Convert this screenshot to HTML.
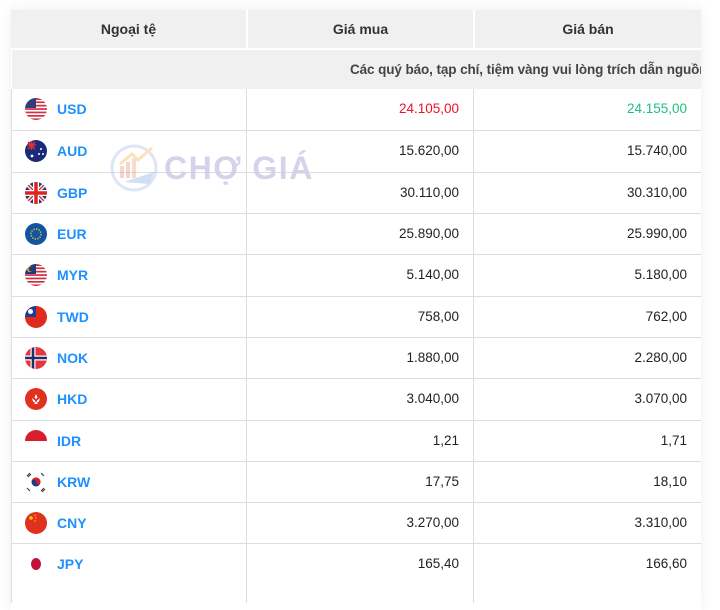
<!DOCTYPE html>
<html><head><meta charset="utf-8"><style>
*{margin:0;padding:0;box-sizing:border-box}
body{width:720px;height:580px;overflow:hidden;background:#fff;font-family:"Liberation Sans",Arial,sans-serif;position:relative}
.shadow{position:absolute;left:11px;top:10px;width:690px;height:600px;box-shadow:0 0 14px rgba(0,0,0,0.07)}
.hdr{position:absolute;top:10px;height:38px;background:#f0f0f0;font-size:14px;font-weight:bold;color:#333;text-align:center;line-height:38px}
.note{position:absolute;left:12px;top:50px;width:689px;height:39px;background:#f0f0f0;font-size:13.5px;font-weight:bold;color:#444;line-height:39px;white-space:nowrap;overflow:hidden}
.note span{position:absolute;left:338px;letter-spacing:-0.1px}
.row{position:absolute;left:11px;width:690px;height:42px;border-top:1px solid #ddd;border-left:1px solid #ddd;background:#fff}
.c1{position:absolute;left:0;width:235px;height:100%;border-right:1px solid #ddd}
.c2{position:absolute;left:235px;width:227px;height:100%;border-right:1px solid #ddd;text-align:right;padding-right:14px;font-size:13.5px;color:#222;line-height:40px}
.c3{position:absolute;left:462px;width:227px;height:100%;text-align:right;padding-right:14px;font-size:13.5px;color:#222;line-height:40px}
.code{position:absolute;left:45px;top:0;line-height:40px;font-size:14px;font-weight:bold;color:#1e90ff}
.flag{position:absolute;left:13px;top:9px;width:22px;height:22px}
.wm{position:absolute;left:110px;top:142px;width:210px;height:52px;pointer-events:none}
.wm span{position:absolute;left:54px;top:8px;font-size:32px;font-weight:bold;color:#cfcbe6;letter-spacing:1.5px;opacity:.85}
</style></head><body>
<div class="shadow"></div>
<div class="hdr" style="left:11px;width:235px">Ngoại tệ</div>
<div class="hdr" style="left:248px;width:225px">Giá mua</div>
<div class="hdr" style="left:475px;width:226px">Giá bán</div>
<div class="note"><span>Các quý báo, tạp chí, tiệm vàng vui lòng trích dẫn nguồn</span></div>

<div class="row" style="top:89px;border-top:none"><div class="c1"><svg class="flag" viewBox="0 0 22 22"><defs><clipPath id="a"><circle cx="11" cy="11" r="11"/></clipPath></defs><g clip-path="url(#a)"><rect width="22" height="22" fill="#fff"/><rect y="0" width="22" height="2" fill="#d22f45"/><rect y="3.4" width="22" height="1.7" fill="#d22f45"/><rect y="6.8" width="22" height="1.7" fill="#d22f45"/><rect y="10.2" width="22" height="1.7" fill="#d22f45"/><rect y="13.6" width="22" height="1.7" fill="#d22f45"/><rect y="17" width="22" height="1.7" fill="#d22f45"/><rect y="20.4" width="22" height="2" fill="#d22f45"/><rect width="11" height="10" fill="#2e3f7a"/></g></svg><span class="code">USD</span></div><div class="c2" style="color:#f0102a">24.105,00</div><div class="c3" style="color:#20c080">24.155,00</div></div>

<div class="row" style="top:130px"><div class="c1"><svg class="flag" viewBox="0 0 22 22"><circle cx="11" cy="11" r="11" fill="#1a2a78"/><path d="M2 5h9M6.5 1v9M3 2l7 7M10 2l-7 7" stroke="#d33" stroke-width="1.5"/><circle cx="16" cy="9" r="1" fill="#fff"/><circle cx="14" cy="14" r="1" fill="#fff"/><circle cx="18" cy="14" r="1" fill="#fff"/><circle cx="7" cy="16" r="1.4" fill="#fff"/></svg><span class="code">AUD</span></div><div class="c2">15.620,00</div><div class="c3">15.740,00</div></div>

<div class="row" style="top:172px"><div class="c1"><svg class="flag" viewBox="0 0 22 22"><defs><clipPath id="b"><circle cx="11" cy="11" r="11"/></clipPath></defs><g clip-path="url(#b)"><rect width="22" height="22" fill="#253a7a"/><path d="M0 0L22 22M22 0L0 22" stroke="#fff" stroke-width="4"/><path d="M0 0L22 22M22 0L0 22" stroke="#d22" stroke-width="1.4"/><path d="M11 0v22M0 11h22" stroke="#fff" stroke-width="6"/><path d="M11 0v22M0 11h22" stroke="#d22" stroke-width="3.5"/></g></svg><span class="code">GBP</span></div><div class="c2">30.110,00</div><div class="c3">30.310,00</div></div>

<div class="row" style="top:213px"><div class="c1"><svg class="flag" viewBox="0 0 22 22"><circle cx="11" cy="11" r="11" fill="#1453a0"/><circle cx="11" cy="11" r="5" fill="none" stroke="#e8c830" stroke-width="1.4" stroke-dasharray="1.3 1.3"/></svg><span class="code">EUR</span></div><div class="c2">25.890,00</div><div class="c3">25.990,00</div></div>

<div class="row" style="top:254px"><div class="c1"><svg class="flag" viewBox="0 0 22 22"><defs><clipPath id="c"><circle cx="11" cy="11" r="11"/></clipPath></defs><g clip-path="url(#c)"><rect width="22" height="22" fill="#fff"/><rect y="0" width="22" height="2" fill="#d22f45"/><rect y="3.4" width="22" height="1.7" fill="#d22f45"/><rect y="6.8" width="22" height="1.7" fill="#d22f45"/><rect y="10.2" width="22" height="1.7" fill="#d22f45"/><rect y="13.6" width="22" height="1.7" fill="#d22f45"/><rect y="17" width="22" height="1.7" fill="#d22f45"/><rect y="20.4" width="22" height="2" fill="#d22f45"/><rect width="11" height="10" fill="#203a80"/><circle cx="5" cy="5" r="3" fill="#f0c020"/><circle cx="6" cy="5" r="2.5" fill="#203a80"/></g></svg><span class="code">MYR</span></div><div class="c2">5.140,00</div><div class="c3">5.180,00</div></div>

<div class="row" style="top:296px"><div class="c1"><svg class="flag" viewBox="0 0 22 22"><defs><clipPath id="d"><circle cx="11" cy="11" r="11"/></clipPath></defs><g clip-path="url(#d)"><rect width="22" height="22" fill="#e02a1c"/><rect width="11" height="11" fill="#1e3c96"/><circle cx="5.5" cy="5.5" r="2.5" fill="#fff"/></g></svg><span class="code">TWD</span></div><div class="c2">758,00</div><div class="c3">762,00</div></div>

<div class="row" style="top:337px"><div class="c1"><svg class="flag" viewBox="0 0 22 22"><defs><clipPath id="e"><circle cx="11" cy="11" r="11"/></clipPath></defs><g clip-path="url(#e)"><rect width="22" height="22" fill="#e8363b"/><path d="M8 0v22M0 11h22" stroke="#fff" stroke-width="5"/><path d="M8 0v22M0 11h22" stroke="#1e2d6b" stroke-width="2.6"/></g></svg><span class="code">NOK</span></div><div class="c2">1.880,00</div><div class="c3">2.280,00</div></div>

<div class="row" style="top:378px"><div class="c1"><svg class="flag" viewBox="0 0 22 22"><circle cx="11" cy="11" r="11" fill="#e0301e"/><path d="M11 6l1.5 3.5-1.5 1.5-1.5-1.5zM15 10l-3 2.5 0 2 2-1zM7 10l3 2.5 0 2-2-1zM9 16l2-3 2 3z" fill="#fff"/></svg><span class="code">HKD</span></div><div class="c2">3.040,00</div><div class="c3">3.070,00</div></div>

<div class="row" style="top:420px"><div class="c1"><svg class="flag" viewBox="0 0 22 22"><path d="M0 11A11 11 0 0 1 22 11Z" fill="#d81e2a"/></svg><span class="code">IDR</span></div><div class="c2">1,21</div><div class="c3">1,71</div></div>

<div class="row" style="top:461px"><div class="c1"><svg class="flag" viewBox="0 0 22 22"><circle cx="11" cy="11" r="4.5" fill="#1e3a8a"/><path d="M6.5 11A4.5 4.5 0 0 1 15.5 11A2.25 2.25 0 0 1 11 11A2.25 2.25 0 0 0 6.5 11" fill="#d81e2a"/><g stroke="#444" stroke-width="1.2"><path d="M2 5l3-3M3 6l3-3M16 2l3 3M17 3l2 2M2 17l3 3M16 20l3-3M17 21l3-3"/></g></svg><span class="code">KRW</span></div><div class="c2">17,75</div><div class="c3">18,10</div></div>

<div class="row" style="top:502px"><div class="c1"><svg class="flag" viewBox="0 0 22 22"><circle cx="11" cy="11" r="11" fill="#e0301e"/><circle cx="6" cy="6" r="1.8" fill="#f5d000"/><circle cx="10" cy="3.5" r=".7" fill="#f5d000"/><circle cx="11" cy="6" r=".7" fill="#f5d000"/><circle cx="10" cy="9" r=".7" fill="#f5d000"/></svg><span class="code">CNY</span></div><div class="c2">3.270,00</div><div class="c3">3.310,00</div></div>

<div class="row" style="top:543px;height:60px"><div class="c1"><svg class="flag" viewBox="0 0 22 22"><ellipse cx="11" cy="11" rx="5" ry="6" fill="#c4113a"/></svg><span class="code">JPY</span></div><div class="c2">165,40</div><div class="c3">166,60</div></div>

<div class="wm"><svg width="52" height="52" viewBox="0 0 52 52" style="position:absolute;left:0;top:0;opacity:.45"><circle cx="24" cy="26" r="22" fill="none" stroke="#b8c8ec" stroke-width="3"/><rect x="10" y="24" width="4" height="12" fill="#f0a090"/><rect x="16" y="20" width="4" height="16" fill="#f0a090"/><rect x="22" y="16" width="4" height="20" fill="#f0b090"/><path d="M10 22L22 12 28 18 42 6" stroke="#f0c060" stroke-width="3" fill="none"/><path d="M14 40l30-10-4 12z" fill="#9ab8e8"/></svg><span>CHỢ GIÁ</span></div>
</body></html>
